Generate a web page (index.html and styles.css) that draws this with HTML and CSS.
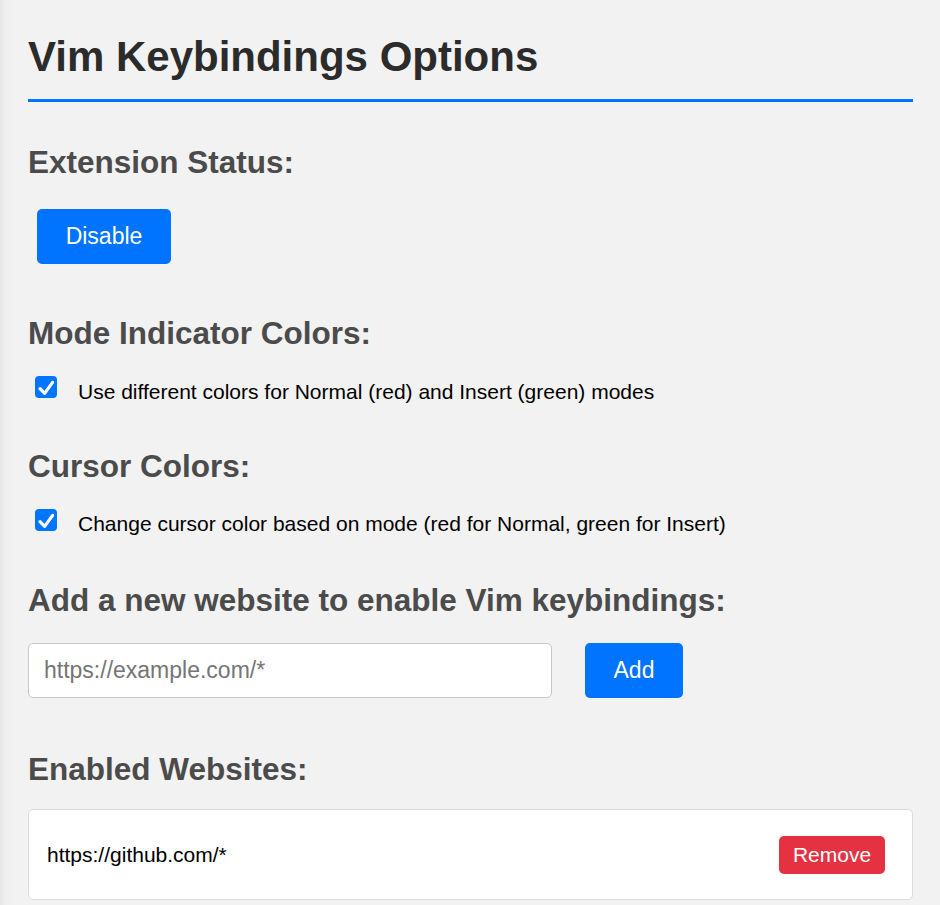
FILE: index.html
```html
<!DOCTYPE html>
<html lang="en">
<head>
<meta charset="utf-8">
<title>Vim Keybindings Options</title>
<link rel="stylesheet" href="styles.css">
</head>
<body>
<div class="container">
  <h1 class="title">Vim Keybindings Options</h1>

  <section class="section sec-status">
    <h2 class="heading">Extension Status:</h2>
    <button class="btn btn-primary btn-toggle" type="button">Disable</button>
  </section>

  <section class="section sec-mode">
    <h2 class="heading">Mode Indicator Colors:</h2>
    <label class="option">
      <span class="check"><svg viewBox="0 0 22 22" width="22" height="22"><path d="M5 12.6 L9.6 17.4 L17.6 6.4" fill="none" stroke="#fff" stroke-width="3.2" stroke-linecap="round" stroke-linejoin="round"/></svg></span>
      <span class="option-text">Use different colors for Normal (red) and Insert (green) modes</span>
    </label>
  </section>

  <section class="section sec-cursor">
    <h2 class="heading">Cursor Colors:</h2>
    <label class="option">
      <span class="check"><svg viewBox="0 0 22 22" width="22" height="22"><path d="M5 12.6 L9.6 17.4 L17.6 6.4" fill="none" stroke="#fff" stroke-width="3.2" stroke-linecap="round" stroke-linejoin="round"/></svg></span>
      <span class="option-text">Change cursor color based on mode (red for Normal, green for Insert)</span>
    </label>
  </section>

  <section class="section sec-add">
    <h2 class="heading">Add a new website to enable Vim keybindings:</h2>
    <div class="add-row">
      <input class="url-input" type="text" placeholder="https://example.com/*">
      <button class="btn btn-primary btn-add" type="button">Add</button>
    </div>
  </section>

  <section class="section sec-list">
    <h2 class="heading">Enabled Websites:</h2>
    <ul class="site-list">
      <li class="site-item">
        <span class="site-url">https://github.com/*</span>
        <button class="btn btn-danger" type="button">Remove</button>
      </li>
    </ul>
  </section>
</div>
</body>
</html>
```

FILE: styles.css
```css
html {
  background: #f2f2f2;
}

body {
  margin: 0;
  min-height: 905px;
  background: linear-gradient(90deg, #e6e6e6 0, #efefef 6px, #f2f2f2 14px);
  font-family: "Liberation Sans", Arial, Helvetica, sans-serif;
  color: #000;
}

.container {
  padding: 0 27px 0 28px;
}

.title {
  margin: 33px 0 0;
  padding-bottom: 18px;
  border-bottom: 3px solid #0074ff;
  font-size: 42px;
  line-height: 48px;
  font-weight: bold;
  color: #2b2b2b;
}

.heading {
  margin: 0;
  font-size: 31.5px;
  line-height: 36px;
  font-weight: bold;
  color: #4b4b4b;
}

.sec-status { margin-top: 42px; }
.sec-mode { margin-top: 51px; }
.sec-cursor { margin-top: 45px; }
.sec-add { margin-top: 47px; }
.sec-list { margin-top: 53px; }

.btn {
  border: none;
  color: #fff;
  font-family: "Liberation Sans", Arial, Helvetica, sans-serif;
  cursor: pointer;
}

.btn-primary {
  background: #0074ff;
  border-radius: 5px;
  height: 55px;
  padding: 0 28.5px;
  font-size: 23px;
}

.btn-toggle {
  display: block;
  margin: 29px 0 0 9px;
  width: 134px;
}

.option {
  display: flex;
  align-items: flex-start;
  margin-top: 25px;
  margin-left: 7px;
}

.check {
  flex: none;
  width: 22px;
  height: 22px;
  border-radius: 4px;
  background: #0075ff;
  display: flex;
}

.option-text {
  margin-left: 21px;
  padding-top: 4.5px;
  font-size: 21px;
  line-height: 22px;
  color: #000;
}

.add-row {
  display: flex;
  align-items: center;
  margin-top: 25px;
}

.url-input {
  box-sizing: border-box;
  width: 524px;
  height: 55px;
  border: 1px solid #c8c8c8;
  border-radius: 5px;
  background: #fff;
  padding: 0 15px;
  font-family: "Liberation Sans", Arial, Helvetica, sans-serif;
  font-size: 23px;
  color: #000;
}

.url-input::placeholder {
  color: #757575;
}

.btn-add {
  margin-left: 33px;
  width: 98px;
}

.site-list {
  list-style: none;
  margin: 22px 0 0;
  padding: 0;
}

.site-item {
  box-sizing: border-box;
  height: 91px;
  display: flex;
  align-items: center;
  justify-content: space-between;
  padding: 0 27px 0 18px;
  background: #fff;
  border: 1px solid #dcdcdc;
  border-radius: 5px;
}

.site-url {
  font-size: 21px;
  color: #000;
}

.btn-danger {
  background: #e53243;
  border-radius: 5px;
  height: 38px;
  width: 106px;
  padding: 0;
  font-size: 21px;
}
```
